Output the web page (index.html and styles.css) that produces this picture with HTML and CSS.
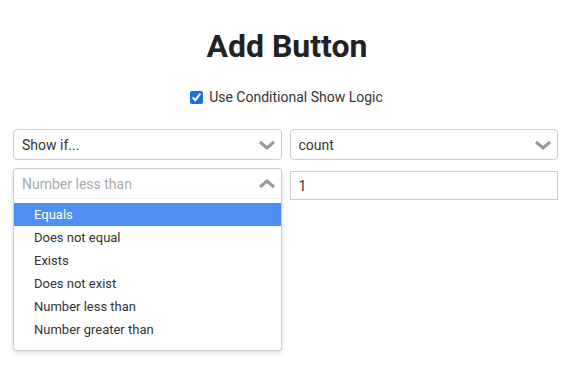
FILE: index.html
```html
<!DOCTYPE html>
<html lang="en">
<head>
    <meta charset="UTF-8" />
    <title>Add Button</title>
    <link rel="stylesheet" href="styles.css">
</head>
<body>
    <h1 class="title">Add Button</h1>
    <label class="logic-toggle">
        <input type="checkbox" checked>
        <span>Use Conditional Show Logic</span>
    </label>

    <div class="fields">
        <div class="select">
            <span class="select-value">Show if...</span>
            <svg class="chevron" width="18" height="10" viewBox="0 0 18 10"><polyline points="2,2 9,8 16,2" /></svg>
        </div>
        <div class="select">
            <span class="select-value">count</span>
            <svg class="chevron" width="18" height="10" viewBox="0 0 18 10"><polyline points="2,2 9,8 16,2" /></svg>
        </div>

        <div class="select-wrap">
            <div class="select open">
                <span class="select-value placeholder">Number less than</span>
                <svg class="chevron" width="18" height="10" viewBox="0 0 18 10"><polyline points="2,8 9,2 16,8" /></svg>
            </div>
            <div class="menu">
                <div class="menu-item active">Equals</div>
                <div class="menu-item">Does not equal</div>
                <div class="menu-item">Exists</div>
                <div class="menu-item">Does not exist</div>
                <div class="menu-item">Number less than</div>
                <div class="menu-item">Number greater than</div>
            </div>
        </div>
        <div class="input-cell">
            <input class="text-input" type="text" value="1">
        </div>
    </div>
</body>
</html>
```

FILE: styles.css
```css
*{
    margin: 0;
    padding: 0;
    box-sizing: border-box;
}
body{
    font-family: Roboto, 'Liberation Sans', sans-serif;
    color: #333;
    background: #fff;
    padding: 26px 17px 20px 13px;
}
.title{
    text-align: center;
    font-size: 32px;
    font-weight: 700;
    color: #222;
    line-height: 40px;
    margin-left: 3px;
}
.logic-toggle{
    display: flex;
    justify-content: center;
    align-items: center;
    gap: 6px;
    margin-top: 23px;
    font-size: 14px;
    color: #333;
    margin-left: 2px;
}
.logic-toggle input{
    width: 13px;
    height: 13px;
    accent-color: #1a6fe0;
    margin: 0;
}
.fields{
    display: grid;
    grid-template-columns: 1fr 1fr;
    column-gap: 8px;
    row-gap: 8px;
    align-items: start;
    margin-top: 24px;
}
.select{
    height: 31px;
    border: 1px solid #ccc;
    border-radius: 4px;
    display: flex;
    align-items: center;
    justify-content: space-between;
    padding: 0 5px 0 8px;
    font-size: 14px;
    color: #333;
    background: #fff;
}
.select-value.placeholder{
    color: #aaa;
}
.chevron polyline{
    fill: none;
    stroke: #999;
    stroke-width: 3;
}
.select-wrap{
    border-radius: 4px;
    box-shadow: 0 2px 4px rgba(0,0,0,0.14);
}
.select.open{
    border-bottom-color: #eee;
    border-bottom-left-radius: 0;
    border-bottom-right-radius: 0;
}
.menu{
    background: #fff;
    border: 1px solid #ccc;
    border-top: none;
    border-radius: 0 0 4px 4px;
    padding: 4px 0 9px;
    font-size: 13px;
    color: #333;
}
.menu-item{
    height: 23px;
    line-height: 23px;
    padding-left: 20px;
}
.menu-item.active{
    background: #4d8ff3;
    color: #fff;
}
.input-cell{
    padding-top: 3px;
}
.text-input{
    display: block;
    width: 100%;
    height: 29px;
    border: 1px solid #ccc;
    padding: 0 8px;
    font-family: Roboto, 'Liberation Sans', sans-serif;
    font-size: 14px;
    color: #333;
    outline: none;
}
```
